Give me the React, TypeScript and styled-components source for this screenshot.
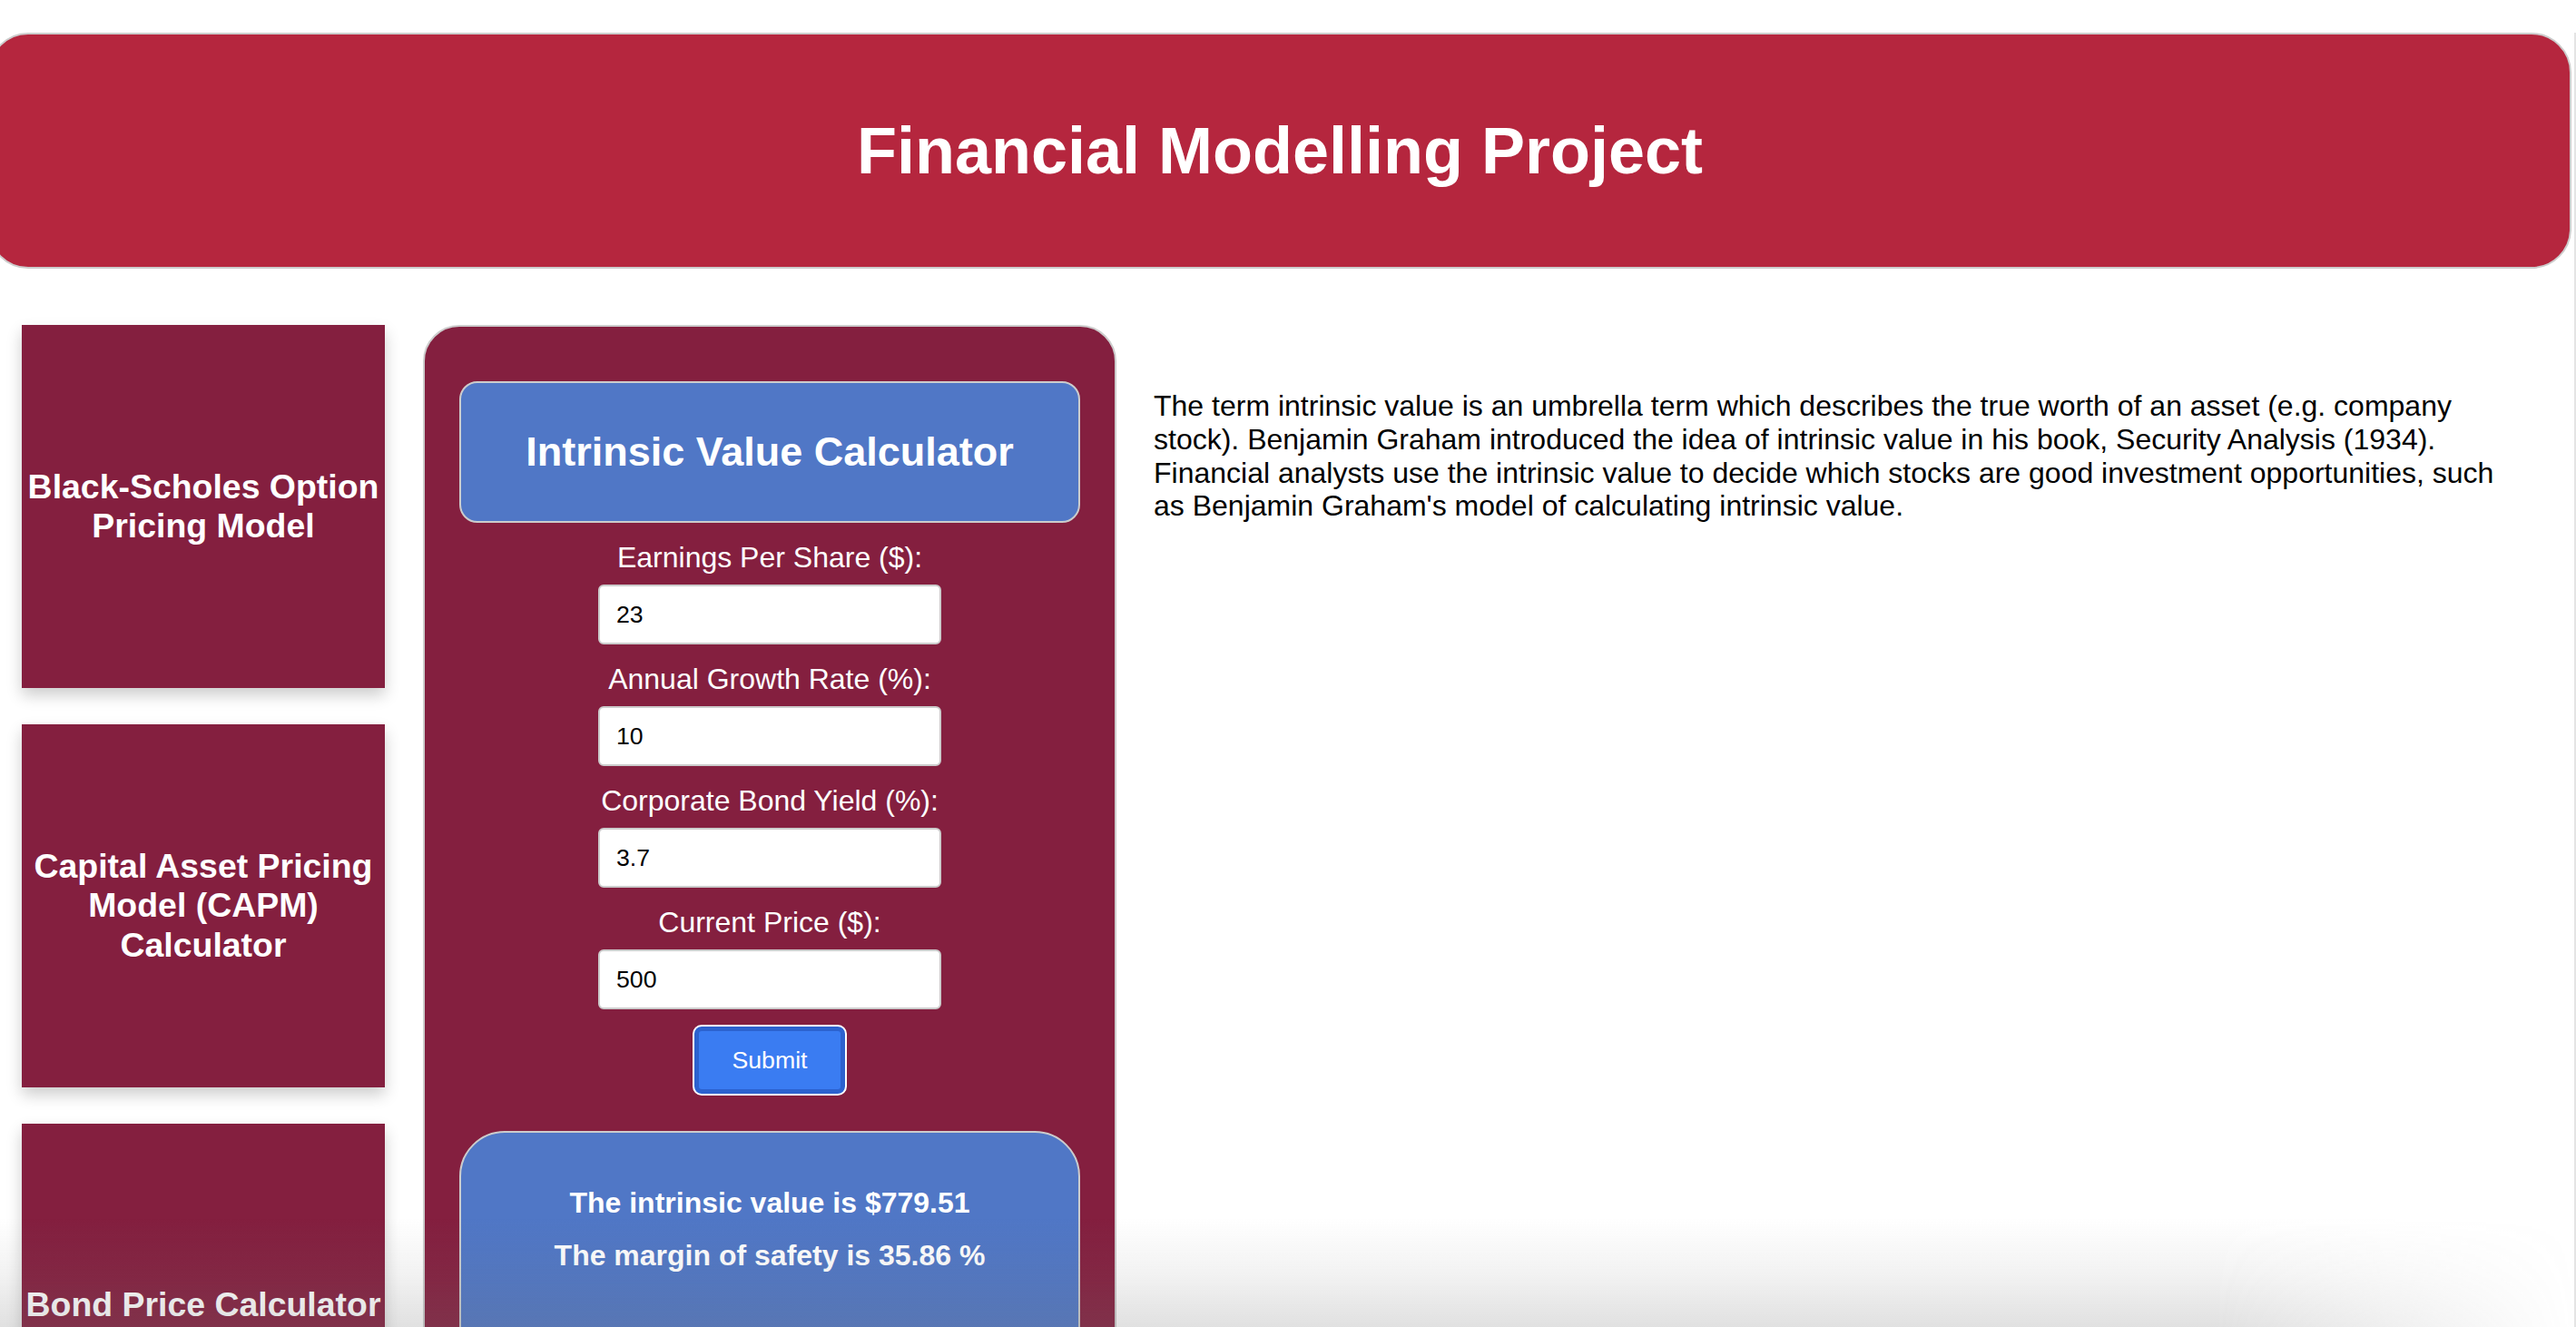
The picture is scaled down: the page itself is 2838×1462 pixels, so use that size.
import React from "react";
import styled, { createGlobalStyle } from "styled-components";

const GlobalStyle = createGlobalStyle`
  html, body {
    margin: 0;
    padding: 0;
    background: #ffffff;
    overflow: hidden;
  }
  body {
    font-family: "Liberation Sans", Arial, Helvetica, sans-serif;
  }
  * {
    box-sizing: border-box;
  }
`;

const Page = styled.div`
  width: 100%;
  min-height: 1462px;
  padding-right: 3px;
  border-right: 2px solid #e4e4e4;
`;

const Header = styled.header`
  margin-top: 36px;
  margin-left: -13px;
  height: 260px;
  background: #b5263e;
  border: 2px solid #cccccc;
  border-radius: 44px;
  display: flex;
  align-items: center;
  justify-content: center;
`;

const Title = styled.h1`
  margin: 0;
  color: #ffffff;
  font-size: 72px;
  font-weight: 700;
  line-height: 1.15;
`;

const Main = styled.main`
  display: flex;
  align-items: flex-start;
  padding-left: 24px;
  margin-top: 62px;
`;

const Sidebar = styled.nav`
  display: flex;
  flex-direction: column;
  gap: 40px;
  width: 400px;
  flex: none;
`;

const NavCard = styled.div`
  width: 400px;
  height: 400px;
  background: #841f3f;
  box-shadow: 0 8px 16px rgba(0, 0, 0, 0.2);
  display: flex;
  align-items: center;
  justify-content: center;
  padding: 0 2px;
`;

const NavTitle = styled.h3`
  margin: 0;
  color: #ffffff;
  font-size: 37.44px;
  font-weight: 700;
  line-height: 1.15;
  text-align: center;
`;

const Panel = styled.section`
  flex: none;
  width: 764px;
  margin-left: 42px;
  background: #841f3f;
  border: 2px solid #cccccc;
  border-radius: 40px;
  padding: 60px 38px 0;
  display: flex;
  flex-direction: column;
  align-items: center;
  min-height: 1200px;
`;

const BlueBox = styled.div<{ $radius: number }>`
  width: 100%;
  background: #5077c6;
  border: 2px solid #cccccc;
  border-radius: ${(p) => p.$radius}px;
`;

const TitleBox = styled(BlueBox)`
  height: 156px;
  display: flex;
  align-items: center;
  justify-content: center;
`;

const PanelTitle = styled.h2`
  margin: 0;
  color: #ffffff;
  font-size: 45px;
  font-weight: 700;
  line-height: 1.15;
`;

const Form = styled.form`
  display: flex;
  flex-direction: column;
  align-items: center;
  width: 100%;
`;

const Field = styled.div`
  display: flex;
  flex-direction: column;
  align-items: center;
  margin-top: 20px;
`;

const Label = styled.label`
  color: #ffffff;
  font-size: 32px;
  line-height: 37px;
`;

const Input = styled.input`
  margin-top: 11px;
  width: 378px;
  height: 66px;
  border: 2px solid #cccccc;
  border-radius: 6px;
  background: #ffffff;
  padding: 0 18px;
  font-family: "Liberation Sans", Arial, Helvetica, sans-serif;
  font-size: 26.67px;
  color: #000000;
  outline: none;
`;

const SubmitButton = styled.button`
  margin-top: 17px;
  width: 170px;
  height: 78px;
  background: #3a7cf2;
  border: 2px solid #ffffff;
  border-radius: 10px;
  box-shadow: inset 0 0 0 5px #2c62cf;
  color: #ffffff;
  font-family: "Liberation Sans", Arial, Helvetica, sans-serif;
  font-size: 26.67px;
  cursor: pointer;
`;

const ResultBox = styled(BlueBox)`
  margin-top: 39px;
  padding: 59px 0 60px;
  display: flex;
  flex-direction: column;
  align-items: center;
  gap: 21px;
  min-height: 320px;
`;

const ResultLine = styled.p`
  margin: 0;
  color: #ffffff;
  font-size: 32px;
  font-weight: 700;
  line-height: 37px;
`;

const Description = styled.p`
  margin: 71px 0 0 41px;
  width: 1500px;
  font-size: 32px;
  line-height: 36.8px;
  color: #000000;
`;

const BottomShade = styled.div`
  position: fixed;
  left: 0;
  right: 0;
  bottom: 0;
  height: 120px;
  pointer-events: none;
  background: linear-gradient(
    to bottom,
    rgba(117, 117, 117, 0) 0%,
    rgba(117, 117, 117, 0.09) 50%,
    rgba(117, 117, 117, 0.22) 100%
  );
  -webkit-mask-image: linear-gradient(to right, #000 0%, #000 86%, transparent 100%);
  mask-image: linear-gradient(to right, #000 0%, #000 86%, transparent 100%);
`;

const navItems = [
  "Black-Scholes Option Pricing Model",
  "Capital Asset Pricing Model (CAPM) Calculator",
  "Bond Price Calculator",
];

const fields = [
  { id: "eps", label: "Earnings Per Share ($):", value: "23" },
  { id: "growth", label: "Annual Growth Rate (%):", value: "10" },
  { id: "yield", label: "Corporate Bond Yield (%):", value: "3.7" },
  { id: "price", label: "Current Price ($):", value: "500" },
];

export default function App() {
  return (
    <>
      <GlobalStyle />
      <Page>
        <Header>
          <Title>Financial Modelling Project</Title>
        </Header>
        <Main>
          <Sidebar>
            {navItems.map((item) => (
              <NavCard key={item}>
                <NavTitle>{item}</NavTitle>
              </NavCard>
            ))}
          </Sidebar>
          <Panel>
            <TitleBox $radius={20}>
              <PanelTitle>Intrinsic Value Calculator</PanelTitle>
            </TitleBox>
            <Form onSubmit={(e) => e.preventDefault()}>
              {fields.map((f) => (
                <Field key={f.id}>
                  <Label htmlFor={f.id}>{f.label}</Label>
                  <Input id={f.id} type="text" defaultValue={f.value} />
                </Field>
              ))}
              <SubmitButton type="submit">Submit</SubmitButton>
            </Form>
            <ResultBox $radius={50}>
              <ResultLine>The intrinsic value is $779.51</ResultLine>
              <ResultLine>The margin of safety is 35.86 %</ResultLine>
            </ResultBox>
          </Panel>
          <Description>
            The term intrinsic value is an umbrella term which describes the true worth of an asset
            (e.g. company stock). Benjamin Graham introduced the idea of intrinsic value in his
            book, Security Analysis (1934). Financial analysts use the intrinsic value to decide
            which stocks are good investment opportunities, such as Benjamin Graham's model of
            calculating intrinsic value.
          </Description>
        </Main>
        <BottomShade />
      </Page>
    </>
  );
}
